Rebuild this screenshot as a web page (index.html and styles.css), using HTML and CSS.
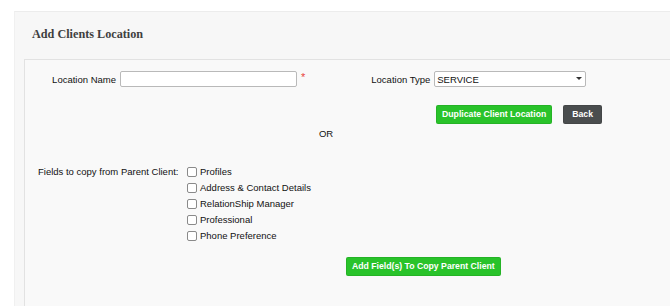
FILE: index.html
```html
<!DOCTYPE html>
<html lang="en">
<head>
<meta charset="utf-8">
<title>Add Clients Location</title>
<link rel="stylesheet" href="styles.css">
</head>
<body>
<div class="panel">
  <div class="panel-head"><h2 class="title">Add Clients Location</h2></div>
  <div class="panel-body">
    <div class="row-top">
      <div class="field field-name">
        <label class="lbl lbl-name" for="locname">Location Name</label>
        <input class="txt" id="locname" type="text">
        <span class="req">*</span>
      </div>
      <div class="field field-type">
        <label class="lbl" for="loctype">Location Type</label>
        <div class="select-wrap">
          <select class="sel" id="loctype"><option>SERVICE</option></select>
        </div>
      </div>
    </div>
    <div class="row-buttons">
      <button class="btn btn-green">Duplicate Client Location</button>
      <button class="btn btn-dark">Back</button>
    </div>
    <div class="or">OR</div>
    <div class="copy">
      <div class="copy-label">Fields to copy from Parent Client:</div>
      <ul class="checks">
        <li><label><input type="checkbox" class="cb"> Profiles</label></li>
        <li><label><input type="checkbox" class="cb"> Address &amp; Contact Details</label></li>
        <li><label><input type="checkbox" class="cb"> RelationShip Manager</label></li>
        <li><label><input type="checkbox" class="cb"> Professional</label></li>
        <li><label><input type="checkbox" class="cb"> Phone Preference</label></li>
      </ul>
    </div>
    <div class="row-add">
      <button class="btn btn-green">Add Field(s) To Copy Parent Client</button>
    </div>
  </div>
</div>
</body>
</html>
```

FILE: styles.css
```css
html, body {
  margin: 0;
  padding: 0;
  background: #ffffff;
  overflow: hidden;
}
body {
  font-family: "Liberation Sans", Arial, sans-serif;
  font-size: 9.5px;
  color: #111;
  width: 670px;
  height: 306px;
}
.panel {
  margin: 11px 0 0 14px;
  width: 656px;
  height: 295px;
  overflow: hidden;
  background: #f7f7f7;
  border-top: 1px solid #ececec;
  border-left: 1px solid #f0f0f0;
  box-sizing: border-box;
  padding-left: 9px;
}
.panel-head {
  height: 47px;
  box-sizing: border-box;
  padding: 14px 0 0 8px;
}
.title {
  margin: 0;
  font-family: "Liberation Serif", "Times New Roman", serif;
  font-weight: bold;
  font-size: 12.2px;
  line-height: 16px;
  color: #3f3f3f;
}
.panel-body {
  background: #f9f9f9;
  border-top: 1px solid #e2e2e2;
  border-left: 1px solid #e2e2e2;
  height: 260px;
  box-sizing: border-box;
  padding-top: 11px;
}
.row-top {
  display: flex;
  align-items: center;
  height: 16px;
}
.field {
  display: flex;
  align-items: center;
}
.lbl {
  color: #111;
  margin-right: 4px;
}
.lbl-name {
  width: 91px;
  text-align: right;
}
.txt {
  width: 177px;
  height: 16px;
  box-sizing: border-box;
  border: 1px solid #b9b9b9;
  border-radius: 2px;
  background: #fff;
  padding: 0 3px;
  margin: 0;
  font: inherit;
}
.req {
  color: #e8423c;
  font-size: 11px;
  margin-left: 4px;
  line-height: 1;
  position: relative;
  top: -2px;
}
.field-type {
  margin-left: 66px;
}
.select-wrap {
  position: relative;
}
.sel {
  appearance: none;
  -webkit-appearance: none;
  width: 152px;
  height: 16px;
  box-sizing: border-box;
  border: 1px solid #b9b9b9;
  border-radius: 2px;
  background: #fff;
  margin: 0;
  padding: 0 2px;
  font: inherit;
  color: #111;
}
.select-wrap::after {
  content: "";
  position: absolute;
  right: 4px;
  top: 6px;
  border-left: 3px solid transparent;
  border-right: 3px solid transparent;
  border-top: 3px solid #333;
}
.row-buttons {
  display: flex;
  gap: 11px;
  margin-top: 18px;
  padding-left: 411px;
}
.btn {
  font-family: "Liberation Sans", Arial, sans-serif;
  font-weight: bold;
  font-size: 8.7px;
  color: #fff;
  height: 19px;
  border: 1px solid rgba(0,0,0,0.08);
  border-radius: 2px;
  padding: 0 5px;
  margin: 0;
  line-height: 17px;
}
.btn-green {
  background: #29c32a;
}
.btn-dark {
  background: #4a4d4e;
  padding: 0 8px;
}
.or {
  text-align: center;
  width: 602px;
  margin-top: 3px;
  line-height: 14px;
  color: #111;
}
.copy {
  display: flex;
  margin-top: 23px;
}
.copy-label {
  width: 158px;
  padding-left: 13px;
  box-sizing: border-box;
  line-height: 16px;
}
.checks {
  list-style: none;
  margin: 0;
  padding: 0 0 0 4px;
}
.checks li {
  height: 16px;
  line-height: 16px;
}
.checks label {
  display: flex;
  align-items: center;
  gap: 3px;
}
.cb {
  appearance: none;
  -webkit-appearance: none;
  width: 10px;
  height: 10px;
  margin: 0;
  border: 1px solid #8a8a8a;
  border-radius: 2px;
  background: #fff;
  box-sizing: border-box;
}
.row-add {
  margin-top: 13px;
  padding-left: 321px;
}
```
